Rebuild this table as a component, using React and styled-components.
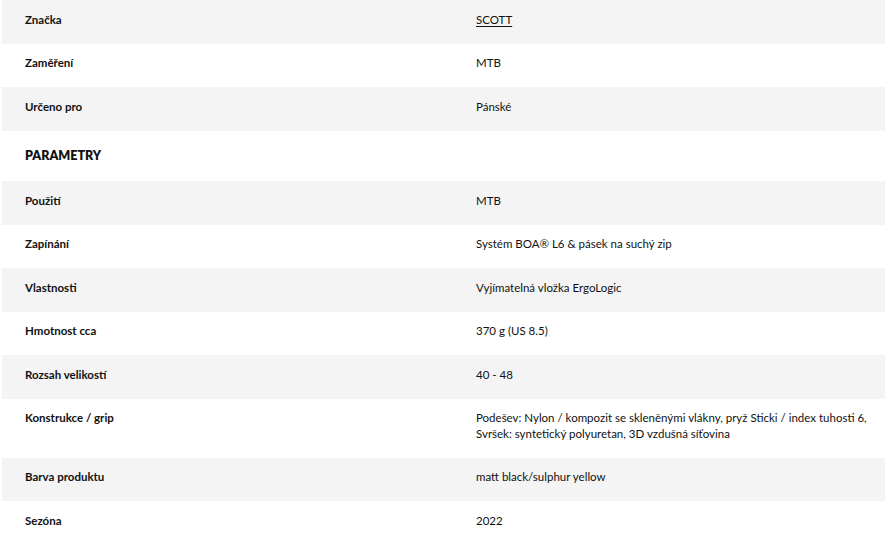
import React from "react";
import styled, { createGlobalStyle } from "styled-components";

const Global = createGlobalStyle`
  html, body { margin: 0; padding: 0; background: #fff; }
  body { font-family: "Lato", "Noto Sans", sans-serif; color: #111; }
`;

const Wrap = styled.div`
  padding-left: 2px;
`;

const Table = styled.div`
  display: grid;
  grid-template-columns: 451px 1fr;
`;

const Row = styled.div`
  display: contents;
  & > * { background: ${(p) => (p.$shaded ? "#f4f4f4" : "#fff")}; }
`;

const Label = styled.div`
  padding: 11.5px 0 16.5px 23px;
  font-size: 11.5px;
  line-height: 15.5px;
  font-weight: 700;
`;

const Value = styled.div`
  padding: 11.5px 12px 16.5px 23px;
  font-size: 11.5px;
  line-height: 15.5px;
  font-weight: 400;
`;

const Link = styled.a`
  color: #111;
  text-decoration: underline;
  text-underline-offset: 2px;
`;

const Heading = styled.div`
  grid-column: 1 / -1;
  padding: 17px 0 17.5px 23px;
  font-size: 12.5px;
  line-height: 16px;
  font-weight: 800;
`;

const top = [
  ["Značka", <Link href="#">SCOTT</Link>],
  ["Zaměření", "MTB"],
  ["Určeno pro", "Pánské"],
];

const params = [
  ["Použití", "MTB"],
  ["Zapínání", "Systém BOA® L6 & pásek na suchý zip"],
  ["Vlastnosti", "Vyjímatelná vložka ErgoLogic"],
  ["Hmotnost cca", "370 g (US 8.5)"],
  ["Rozsah velikostí", "40 - 48"],
  [
    "Konstrukce / grip",
    <>
      Podešev: Nylon / kompozit se skleněnými vlákny, pryž Sticki / index tuhosti 6,
      <br />
      Svršek: syntetický polyuretan, 3D vzdušná síťovina
    </>,
  ],
  ["Barva produktu", "matt black/sulphur yellow"],
  ["Sezóna", "2022"],
];

export default function App() {
  return (
    <Wrap>
      <Global />
      <Table>
        {top.map(([k, v], i) => (
          <Row key={k} $shaded={i % 2 === 0}>
            <Label>{k}</Label>
            <Value>{v}</Value>
          </Row>
        ))}
        <Heading>PARAMETRY</Heading>
        {params.map(([k, v], i) => (
          <Row key={k} $shaded={i % 2 === 0}>
            <Label>{k}</Label>
            <Value>{v}</Value>
          </Row>
        ))}
      </Table>
    </Wrap>
  );
}
